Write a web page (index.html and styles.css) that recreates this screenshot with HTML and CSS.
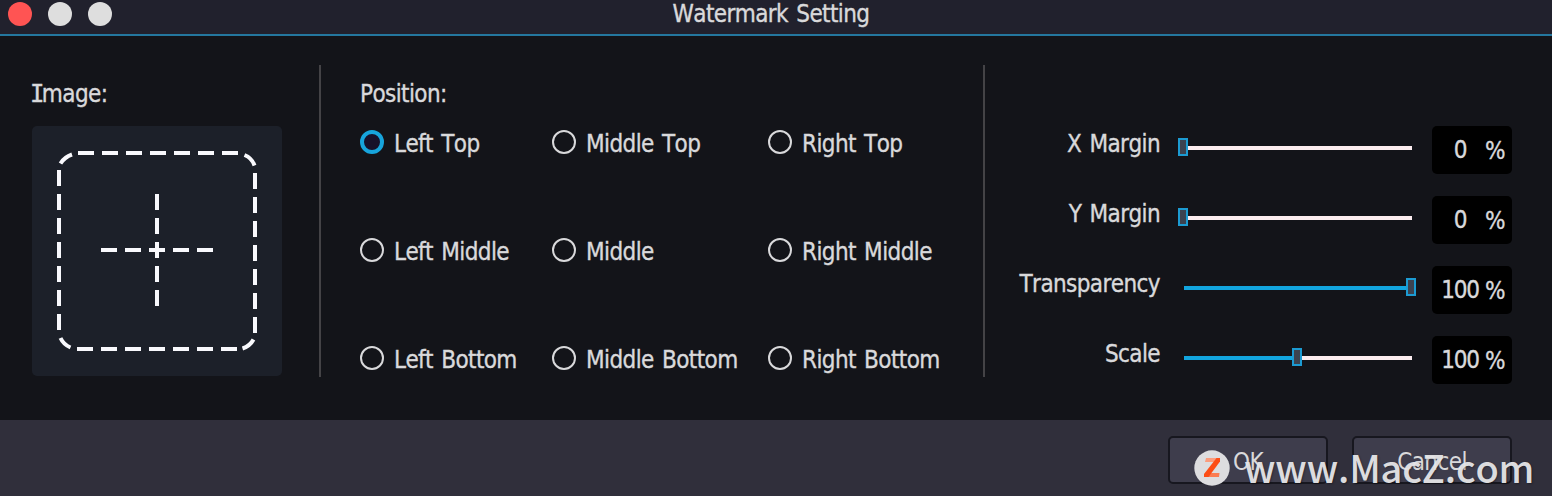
FILE: index.html
```
<!DOCTYPE html>
<html lang="en">
  <head>
    <meta charset="UTF-8" />
    <meta name="viewport" content="width=device-width, initial-scale=1.0" />
    <title>Watermark Setting</title>
    <link rel="stylesheet" href="styles.css">
  </head>
  <body>
    <div class="titlebar">
      <div class="lights">
        <span class="light close"></span>
        <span class="light"></span>
        <span class="light"></span>
      </div>
      <div class="title">Watermark Setting</div>
    </div>
    <div class="container">
      <div class="image-panel">
        <div class="label"><span class="cap-i">I</span>mage:</div>
        <div class="drop">
          <svg width="250" height="250" viewBox="0 0 250 250" fill="none" stroke="#f9f9fd" stroke-width="4">
            <!-- edges -->
            <path d="M46 27H206M223 47V207M45 223H205M27 44V204" stroke-dasharray="16 8" />
            <!-- corners -->
            <path d="M40 28.5Q32.5 31 28.5 37.5M212.5 29Q220 32 222.5 39.5M28.5 212Q31.5 218.5 38.5 221.5M210.5 222.5Q218 220 221.5 213.5" />
            <path d="M69 124H181M125 68V180" stroke-dasharray="16 8" />
          </svg>
        </div>
      </div>
      <div class="position-panel">
        <div class="label">Position:</div>
        <div class="radios">
          <div class="radio checked"><i></i><span>Left Top</span></div>
          <div class="radio"><i></i><span>Middle Top</span></div>
          <div class="radio"><i></i><span>Right Top</span></div>
          <div class="radio"><i></i><span>Left Middle</span></div>
          <div class="radio"><i></i><span>Middle</span></div>
          <div class="radio"><i></i><span>Right Middle</span></div>
          <div class="radio"><i></i><span>Left Bottom</span></div>
          <div class="radio"><i></i><span>Middle Bottom</span></div>
          <div class="radio"><i></i><span>Right Bottom</span></div>
        </div>
      </div>
      <div class="slider-panel">
        <div class="row">
          <div class="name">X Margin</div>
          <div class="slider"><div class="fill" style="width: 0%"></div><div class="thumb"></div><div class="rest"></div></div>
          <div class="value"><span class="num">0</span><span class="unit">%</span></div>
        </div>
        <div class="row">
          <div class="name">Y Margin</div>
          <div class="slider"><div class="fill" style="width: 0%"></div><div class="thumb"></div><div class="rest"></div></div>
          <div class="value"><span class="num">0</span><span class="unit">%</span></div>
        </div>
        <div class="row">
          <div class="name">Transparency</div>
          <div class="slider"><div class="fill" style="width: 100%"></div><div class="thumb"></div><div class="rest"></div></div>
          <div class="value"><span class="num">100</span><span class="unit">%</span></div>
        </div>
        <div class="row">
          <div class="name">Scale</div>
          <div class="slider"><div class="fill" style="width: 50%"></div><div class="thumb"></div><div class="rest"></div></div>
          <div class="value"><span class="num">100</span><span class="unit">%</span></div>
        </div>
      </div>
    </div>
    <div class="footer">
      <div class="btn">OK</div>
      <div class="btn">Cancel</div>
      <div class="site">
        <svg width="36" height="36" viewBox="0 0 36 36">
          <circle cx="18" cy="18" r="17.7" fill="#dddddf" />
          <path d="M12 8H26L24.5 12H11Z" fill="#fb9c7d" />
          <path d="M11 23H25.5L25 27H10Z" fill="#fb7c52" />
          <path d="M22.5 8H26V11.5L14.5 27H10V24Z" fill="#fc4d16" />
        </svg>
        <span>www.MacZ.com</span>
      </div>
    </div>
  </body>
</html>
```

FILE: styles.css
```
* {
  margin: 0;
  padding: 0;
  box-sizing: border-box;
}
body {
  width: 1552px;
  height: 496px;
  overflow: hidden;
  font-family: "DejaVu Sans Condensed", "DejaVu Sans", sans-serif;
  font-stretch: condensed;
  font-size: 24px;
  font-kerning: none;
  line-height: 28px;
  letter-spacing: -0.6px;
  word-spacing: 2px;
  -webkit-text-stroke: 0.35px currentColor;
  white-space: nowrap;
  background-color: #131419;
  color: #d9d9db;
  display: flex;
  flex-direction: column;
}
.titlebar {
  height: 36px;
  background-color: #21212d;
  border-bottom: 2px solid #24779f;
  display: grid;
  grid-template-columns: 1fr auto 1fr;
}
.lights {
  display: flex;
  gap: 16px;
  padding: 2px 0 0 8px;
}
.light {
  width: 24px;
  height: 24px;
  border-radius: 50%;
  background-color: #dedede;
}
.close {
  background-color: #ff5453;
}
.title {
  margin-right: 10px;
}
.container {
  height: 384px;
  display: grid;
  grid-template-columns: 321px 664px 1fr;
  padding-top: 29px;
}
.image-panel,
.position-panel {
  height: 312px;
  border-right: 2px solid #444346;
}
.image-panel {
  padding: 15px 0 0 32px;
}
.cap-i {
  font-family: "DejaVu Sans Mono", monospace;
  margin: 0 -2px 0 -2px;
}
.drop {
  width: 250px;
  height: 250px;
  margin-top: 18px;
  border-radius: 5px;
  background-color: #1c2029;
}
.drop svg {
  display: block;
}
.position-panel {
  padding: 15px 0 0 39px;
}
.radios {
  display: grid;
  grid-template-columns: 192px 216px 1fr;
  grid-auto-rows: 28px;
  row-gap: 80px;
  margin-top: 22px;
}
.radio {
  display: flex;
  gap: 10px;
}
.radio i {
  width: 24px;
  height: 24px;
  border-radius: 50%;
  border: 2px solid #d9d9db;
}
.checked i {
  border: 4px solid #17a4dc;
  background-color: #17112a;
}
.slider-panel {
  display: flex;
  flex-direction: column;
  gap: 22px;
  padding-top: 61px;
}
.row {
  height: 48px;
  display: flex;
}
.name {
  width: 175px;
  padding-top: 4px;
  text-align: right;
}
.slider {
  width: 228px;
  height: 18px;
  margin: 12px 20px 0 24px;
  display: flex;
  align-items: center;
}
.fill,
.rest {
  height: 4px;
  margin-top: 2px;
}
.fill {
  flex: none;
  background-color: #12a5df;
}
.rest {
  flex: 1;
  background-color: #fbecef;
}
.thumb {
  flex: none;
  z-index: 1;
  width: 10px;
  height: 18px;
  margin: 0 -4px 0 -6px;
  border: 2px solid #1c9bd2;
  background-color: #3c4350;
}
.value {
  width: 80px;
  height: 48px;
  border-radius: 5px;
  background-color: #000;
  display: flex;
}
.num {
  width: 56px;
  padding-top: 10px;
  text-align: center;
  letter-spacing: -1.2px;
}
.unit {
  padding-top: 11px;
  margin-left: -3px;
}
.footer {
  position: relative;
  height: 76px;
  background-color: #302f3b;
  display: flex;
  justify-content: flex-end;
  gap: 24px;
  padding: 16px 40px 0 0;
}
.btn {
  width: 160px;
  height: 48px;
  border: 2px solid #17171f;
  border-radius: 5px;
  background-color: #3e3d4c;
  line-height: 48px;
  text-align: center;
  -webkit-text-stroke: 0;
}
/* site mark printed over the buttons */
.site {
  position: absolute;
  left: 1194px;
  top: 20px;
  display: flex;
  align-items: center;
  gap: 14px;
  height: 56px;
  font-family: "Noto Sans CJK SC", sans-serif;
  font-stretch: normal;
  font-size: 38px;
  font-weight: 500;
  letter-spacing: -0.15px;
  -webkit-text-stroke: 0;
  color: rgba(232, 232, 234, 0.95);
  text-shadow: 1px 1px 2px rgba(0, 0, 0, 0.3);
}
.site span {
  margin-top: -2px;
}
```
